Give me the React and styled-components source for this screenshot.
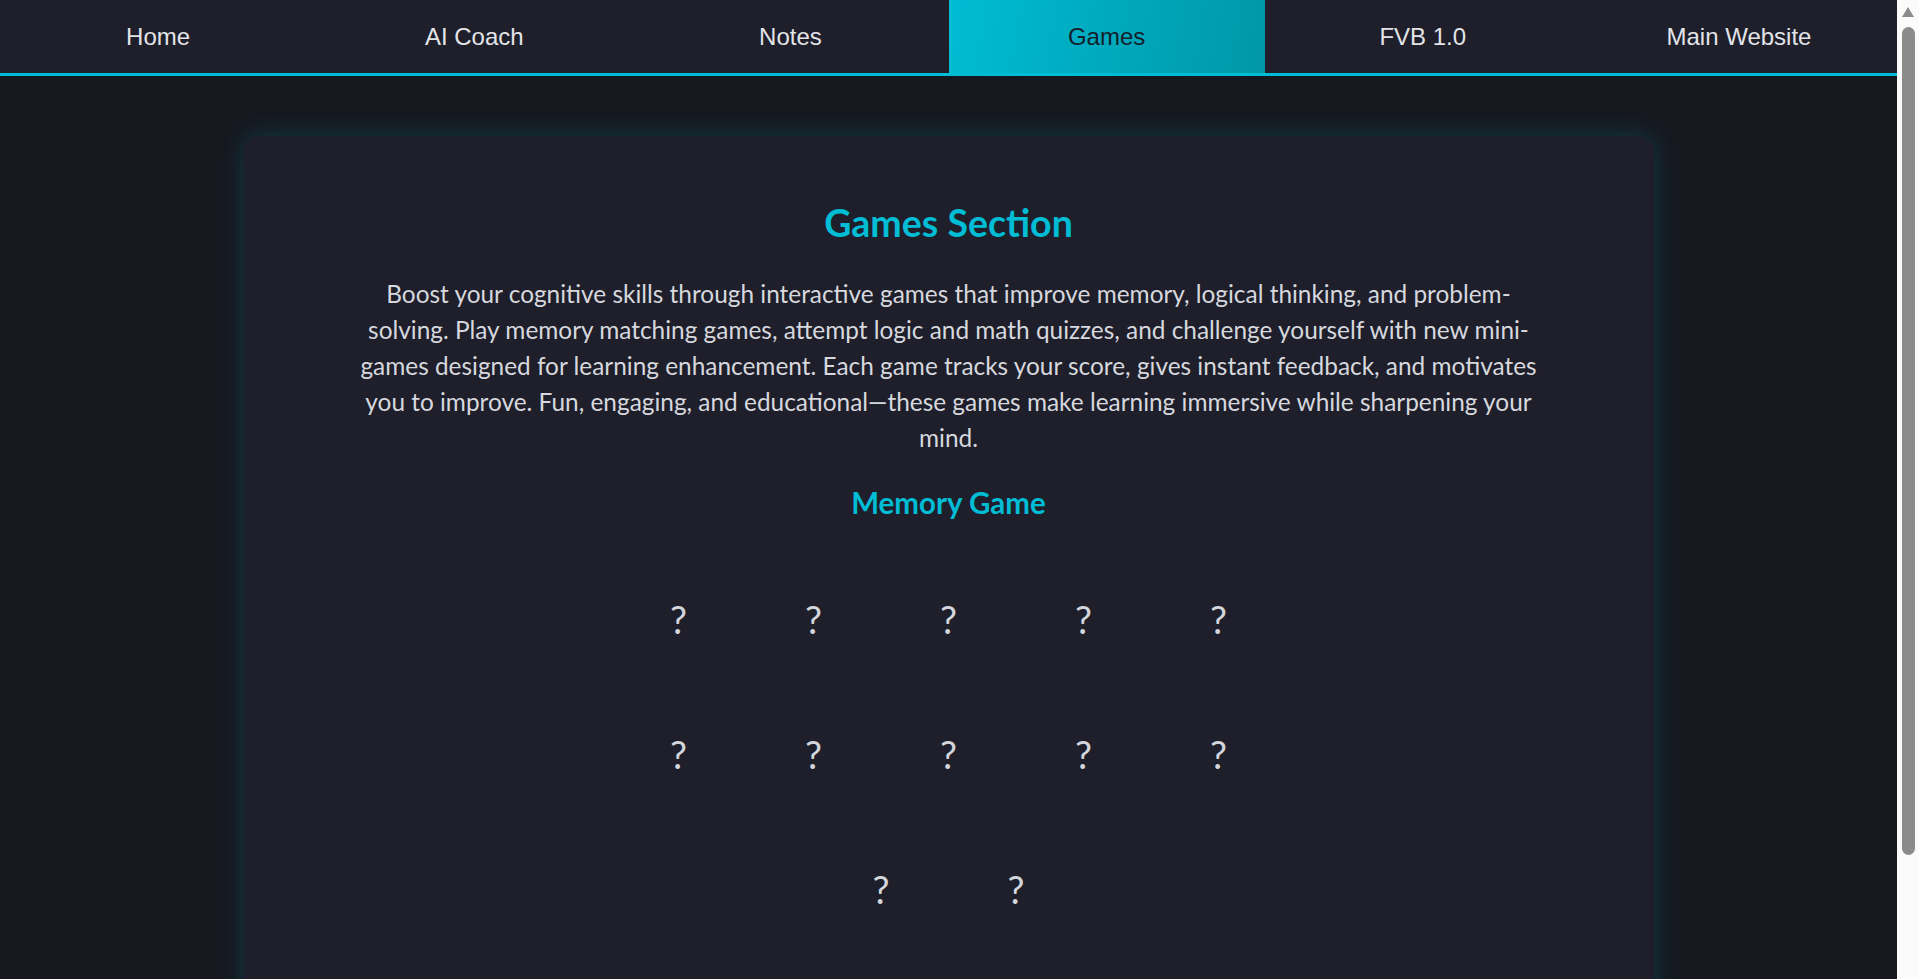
import React from "react"
import styled, { createGlobalStyle } from "styled-components"

const GlobalStyle = createGlobalStyle`
  html, body {
    margin: 0;
    padding: 0;
    background: #16181f;
    overflow: hidden;
  }

  body {
    font-family: Lato, "Open Sans", sans-serif;
    color: #d6d8de;
  }
`

const Page = styled.div`
  display: grid;
  grid-template-columns: 1fr 22px;
  height: 100vh;
`

const Content = styled.div`
  overflow-y: auto;
  background: #16181f;
`

const ScrollRail = styled.aside`
  display: flex;
  flex-direction: column;
  align-items: center;
  gap: 10px;
  padding-top: 7px;
  background: #fbfbfb;
`

const RailArrow = styled.div`
  width: 0;
  height: 0;
  border-left: 6.5px solid transparent;
  border-right: 6.5px solid transparent;
  border-bottom: 10px solid #8b8b8b;
`

const RailThumb = styled.div`
  width: 13px;
  height: 828px;
  background: #8b8b8b;
  border-radius: 7px;
`

const Nav = styled.nav`
  display: flex;
  background: #1e1f2b;
  border-bottom: 3px solid #00bcd4;
`

const NavItem = styled.a`
  flex: 1;
  height: 73px;
  display: flex;
  align-items: center;
  justify-content: center;
  font-family: "Liberation Sans", Arial, sans-serif;
  font-size: 24px;
  text-decoration: none;
  color: ${(p) => (p.$active ? "#13202a" : "#e2e4e8")};
  background: ${(p) =>
    p.$active ? "linear-gradient(100deg, #00bcd4 0%, #0097a7 100%)" : "transparent"};
`

const Main = styled.main`
  padding: 60px 0 60px;
`

const Section = styled.section`
  max-width: 1410px;
  margin: 0 auto;
  box-sizing: border-box;
  padding: 65px 40px 100px;
  background: #1e1f2b;
  border-radius: 16px;
  box-shadow: 0 0 24px rgba(0, 188, 212, 0.22);
  text-align: center;
`

const Title = styled.h2`
  margin: 0;
  font-size: 37.5px;
  line-height: 44px;
  font-weight: 700;
  color: #00bcd4;
`

const Desc = styled.p`
  max-width: 1180px;
  margin: 31px auto 0;
  font-size: 24.4px;
  line-height: 36px;
  color: #d6d8de;
`

const SubTitle = styled.h3`
  margin: 31px 0 0;
  font-size: 29.5px;
  line-height: 32px;
  font-weight: 700;
  color: #00bcd4;
`

const Board = styled.div`
  display: flex;
  flex-wrap: wrap;
  justify-content: center;
  gap: 15px;
  max-width: 660px;
  margin: 40px auto 0;
`

const Tile = styled.div`
  width: 120px;
  height: 120px;
  display: flex;
  align-items: center;
  justify-content: center;
  background: #1e1f2b;
  border-radius: 10px;
  font-size: 38px;
  color: #d3d6dc;
  cursor: pointer;
  user-select: none;
`

const links = ["Home", "AI Coach", "Notes", "Games", "FVB 1.0", "Main Website"]

const App = () => {
  const tiles = Array.from({ length: 12 }, (_, i) => i)

  return (
    <Page>
      <GlobalStyle />
      <Content>
        <Nav>
          {links.map((l) => (
            <NavItem key={l} href="#" $active={l === "Games"}>
              {l}
            </NavItem>
          ))}
        </Nav>
        <Main>
          <Section>
            <Title>Games Section</Title>
            <Desc>
              Boost your cognitive skills through interactive games that improve
              memory, logical thinking, and problem-solving. Play memory matching
              games, attempt logic and math quizzes, and challenge yourself with
              new mini-games designed for learning enhancement. Each game tracks
              your score, gives instant feedback, and motivates you to improve.
              Fun, engaging, and educational—these games make learning immersive
              while sharpening your mind.
            </Desc>
            <SubTitle>Memory Game</SubTitle>
            <Board>
              {tiles.map((t) => (
                <Tile key={t}>?</Tile>
              ))}
            </Board>
          </Section>
        </Main>
      </Content>
      <ScrollRail>
        <RailArrow />
        <RailThumb />
      </ScrollRail>
    </Page>
  )
}

export default App
